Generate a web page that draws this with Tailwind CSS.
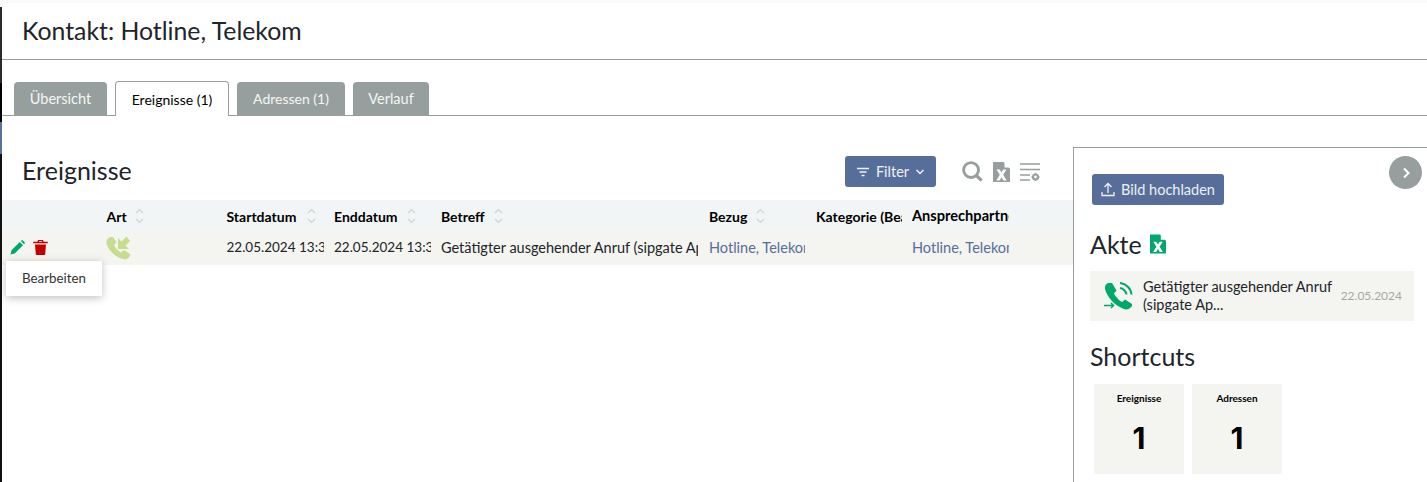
<!DOCTYPE html>
<html lang="de">
<head>
  <meta charset="UTF-8">
  <title>Kontakt: Hotline, Telekom</title>
  <script src="https://cdn.jsdelivr.net/npm/@tailwindcss/browser@4"></script>
</head>
<body class="bg-white h-[482px] overflow-hidden font-['Lato','Noto_Sans',sans-serif] text-[#212529]">
  <div class="relative flex h-[482px]">
    <!-- linker Rand -->
    <div class="w-[2px] shrink-0 flex flex-col">
      <div class="h-[7px] bg-white"></div>
      <div class="h-[76px] bg-[#2b2b2b]"></div>
      <div class="h-[39px] bg-[#000000]"></div>
      <div class="h-[32px] bg-[#5a6f9c]"></div>
      <div class="flex-1 bg-[#111111]"></div>
    </div>

    <div class="flex-1 min-w-0 flex flex-col">
      <div class="h-[3px] bg-[#f8f9f9]"></div>
      <header class="h-[57px] border-b border-[#969f9e] pl-[20px] flex items-center">
        <h1 class="text-[24.8px] leading-none">Kontakt: Hotline, Telekom</h1>
      </header>

      <!-- Tabs -->
      <nav class="h-[56px] border-b border-[#969f9e] pl-[12px] flex items-end gap-[8px] text-[14px]">
        <a class="h-[33px] w-[93px] flex items-center justify-center rounded-t-[4px] bg-[#969f9e] text-white/90 text-[14.5px]">Übersicht</a>
        <a class="h-[35px] w-[114px] -mb-[1px] flex items-center justify-center rounded-t-[4px] border border-b-0 border-[#969f9e] bg-white text-black">Ereignisse (1)</a>
        <a class="h-[33px] w-[108px] flex items-center justify-center rounded-t-[4px] bg-[#969f9e] text-white/90">Adressen (1)</a>
        <a class="h-[33px] w-[76px] flex items-center justify-center rounded-t-[4px] bg-[#969f9e] text-white/90 text-[14.5px]">Verlauf</a>
      </nav>

      <div class="flex-1 flex min-h-0">
        <!-- Ereignisse -->
        <main class="w-[1071px] shrink-0 pt-[31px]">
          <div class="h-[53px] flex items-start pl-[20px] pr-[32px]">
            <h2 class="text-[25px] leading-[46px] h-[46px]">Ereignisse</h2>
            <button class="ml-auto mt-[9px] h-[31px] w-[91px] rounded-[3px] bg-[#576e9b] text-white/90 text-[14.5px] flex items-center justify-center gap-[6px]">
              <svg class="w-[14px] h-[14px]" viewBox="0 0 14 14" fill="none" stroke="currentColor" stroke-width="1.4"><path d="M1 3.500h12M3.500 7h7M5.500 10.500h3"/></svg>
              Filter
              <svg class="w-[10px] h-[10px]" viewBox="0 0 10 10" fill="none" stroke="currentColor" stroke-width="1.500"><path d="M1.500 3l3.500 3.500L8.500 3"/></svg>
            </button>
            <div class="ml-[26px] mt-[14px] flex items-center gap-[9.500px] text-[#969f9e]">
              <svg class="w-[21px] h-[21px]" viewBox="0 0 22 22" fill="none" stroke="currentColor"><circle cx="9.500" cy="9.500" r="7.800" stroke-width="3"/><path d="M15 15l5.500 5.500" stroke-width="3.500"/></svg>
              <svg class="w-[17px] h-[20px]" viewBox="0 0 17 20" fill="currentColor"><path d="M0 0h10.500L17 6.500V20H0z"/><path d="M11.500 0v5.500H17z" fill="#fff"/><path d="M3.500 7.500h3.200L8.500 10.500l1.800-3h3.200l-3.300 5.300 3.500 5.700h-3.300l-1.900-3.200-1.900 3.200H3.300l3.500-5.700z" fill="#fff"/></svg>
              <svg class="w-[22px] h-[20px]" viewBox="0 0 22 20" fill="none" stroke="currentColor" stroke-width="1.500"><path d="M1 2h20M1 7.500h20M1 13h10M1 18h10"/><circle cx="16.500" cy="15" r="2.500" stroke-width="2.200"/><path d="M16.500 11v1.500M16.500 17.500V19M12.500 15H14M19 15h1.500" stroke-width="1.500"/></svg>
            </div>
          </div>

          <!-- Tabelle -->
          <div class="h-[32px] bg-[#f1f5f6] flex items-center text-[14px] font-bold text-black">
            <div class="w-[104.500px]"></div>
            <div class="w-[120px] flex items-center gap-[8px]">Art
              <svg class="w-[9px] h-[16px] text-[#cfd4d2]" viewBox="0 0 9 16" fill="none" stroke="currentColor" stroke-width="1.200"><path d="M1 5l3.500-3.500L8 5M1 11l3.500 3.500L8 11"/></svg>
            </div>
            <div class="w-[107.500px] flex items-center gap-[11px]">Startdatum
              <svg class="w-[9px] h-[16px] text-[#cfd4d2]" viewBox="0 0 9 16" fill="none" stroke="currentColor" stroke-width="1.200"><path d="M1 5l3.500-3.500L8 5M1 11l3.500 3.500L8 11"/></svg>
            </div>
            <div class="w-[107px] flex items-center gap-[9px]">Enddatum
              <svg class="w-[9px] h-[16px] text-[#cfd4d2]" viewBox="0 0 9 16" fill="none" stroke="currentColor" stroke-width="1.200"><path d="M1 5l3.500-3.500L8 5M1 11l3.500 3.500L8 11"/></svg>
            </div>
            <div class="w-[268px] flex items-center gap-[9px]">Betreff
              <svg class="w-[9px] h-[16px] text-[#cfd4d2]" viewBox="0 0 9 16" fill="none" stroke="currentColor" stroke-width="1.200"><path d="M1 5l3.500-3.500L8 5M1 11l3.500 3.500L8 11"/></svg>
            </div>
            <div class="w-[107px] flex items-center gap-[9px]">Bezug
              <svg class="w-[9px] h-[16px] text-[#cfd4d2]" viewBox="0 0 9 16" fill="none" stroke="currentColor" stroke-width="1.200"><path d="M1 5l3.500-3.500L8 5M1 11l3.500 3.500L8 11"/></svg>
            </div>
            <div class="w-[86px] mr-[10px] overflow-hidden whitespace-nowrap">Kategorie (Bearbeiter)</div>
            <div class="w-[97px] overflow-hidden whitespace-nowrap text-[14.6px]">Ansprechpartner</div>
          </div>
          <div class="h-[33px] pb-[2px] bg-[#f4f4f0] flex items-center text-[14.5px]">
            <div class="w-[104.500px] pl-[8px] flex items-center gap-[8px]">
              <svg class="w-[15px] h-[15px] text-[#00a86b]" viewBox="0 0 15 15" fill="currentColor"><path d="M.5 14.500l1-4.300L9.800 2l3.200 3.200-8.300 8.300zM10.800 1l.6-.6a1 1 0 0 1 1.400 0l1.800 1.800a1 1 0 0 1 0 1.400l-.6.6z"/></svg>
              <svg class="w-[15px] h-[15px] text-[#c40000]" viewBox="0 0 15 15" fill="currentColor"><path d="M5 0h5l.6 1.800h4.200v1.400H.2V1.800h4.200zM6 1v.8h3V1z" fill-rule="evenodd"/><path d="M2 4.500h11l-.8 9.700a1 1 0 0 1-1 .8H3.800a1 1 0 0 1-1-.8z"/></svg>
            </div>
            <div class="w-[120px]">
              <svg class="-ml-[1px] w-[24px] h-[24px] text-[#c6dd8f]" viewBox="0 0 24 24" fill="currentColor"><path d="M4 1C2 2 0 4 .5 7 2 14 9 21 17 23c3 1 5 0 7-3v-2l-6-4-3 2.500c-3-1.500-6-5-7-7.500l2.500-3L7 1z"/><path d="M12 2v11h11l-3.500-3.500L24 5l-3.500-4.500L15.500 5.500z"/></svg>
            </div>
            <div class="w-[97.500px] mr-[10px] overflow-hidden whitespace-nowrap text-[13.5px]">22.05.2024 13:30</div>
            <div class="w-[97px] mr-[10px] overflow-hidden whitespace-nowrap text-[13.5px]">22.05.2024 13:30</div>
            <div class="w-[257px] mr-[11px] overflow-hidden whitespace-nowrap">Getätigter ausgehender Anruf (sipgate App)</div>
            <div class="w-[96px] mr-[11px] overflow-hidden whitespace-nowrap text-[#576e9b]">Hotline, Telekom</div>
            <div class="w-[96px]"></div>
            <div class="w-[97px] overflow-hidden whitespace-nowrap text-[#576e9b]">Hotline, Telekom</div>
          </div>
        </main>

        <!-- Seitenleiste -->
        <aside class="relative flex-1 mt-[31px] border-l border-t border-[#969f9e] pl-[16px] pr-[13px]">
          <button class="mt-[26px] ml-[2px] h-[31px] w-[132px] rounded-[3px] bg-[#576e9b] text-white/90 text-[14.5px] flex items-center justify-center gap-[6px]">
            <svg class="w-[14px] h-[15px]" viewBox="0 0 14 15" fill="none" stroke="currentColor" stroke-width="1.300"><path d="M7 11V1.500M3.500 5 7 1.500 10.500 5M1 10v3.500h12V10"/></svg>
            Bild hochladen
          </button>
          <button class="absolute right-[5px] top-[8px] w-[33px] h-[33px] rounded-full bg-[#969f9e] flex items-center justify-center" aria-label="Einklappen">
            <svg class="w-[12px] h-[12px]" viewBox="0 0 12 12" fill="none" stroke="#fff" stroke-width="2"><path d="M4 1.500 8.500 6 4 10.500"/></svg>
          </button>
          <div class="mt-[21px] flex items-center gap-[8px]">
            <h3 class="text-[25px] leading-[36px]">Akte</h3>
            <svg class="w-[16px] h-[20px] text-[#00a86b]" viewBox="0 0 17 20" fill="currentColor"><path d="M0 0h10.500L17 6.500V20H0z"/><path d="M11.500 0v5.500H17z" fill="#fff"/><path d="M3.500 7.500h3.200L8.500 10.500l1.800-3h3.200l-3.300 5.300 3.500 5.700h-3.300l-1.900-3.200-1.900 3.200H3.300l3.500-5.700z" fill="#fff"/></svg>
          </div>
          <div class="mt-[9px] h-[50px] bg-[#f4f4f0] flex items-center pl-[14px] pr-[12px]">
            <svg class="w-[29px] h-[28px] shrink-0 text-[#00a86b]" viewBox="0 0 29 28" fill="currentColor"><path d="M4 1C2 2 .5 4 1 7c2 8 10 17 19 20 3 1 6 0 8-3v-2l-7-4.500-3 2.500c-3-1.500-6.500-5.500-8-8.500l2.500-3L8 1z"/><path d="M16 1c6 .5 11 5.500 11.500 11.500M16 6c3.200.4 6.100 3.300 6.500 6.500" fill="none" stroke="currentColor" stroke-width="2"/><path d="M0 23.500h9M7 21l2.500 2.500L7 26" fill="none" stroke="currentColor" stroke-width="1.500"/></svg>
            <div class="ml-[10px] w-[191px] text-[14.5px] leading-[18px]">Getätigter ausgehender Anruf (sipgate Ap...</div>
            <div class="ml-auto text-[12px] text-[#a3a8a6]">22.05.2024</div>
          </div>
          <h3 class="mt-[17px] text-[25px] leading-[36px]">Shortcuts</h3>
          <div class="mt-[10px] ml-[4px] flex gap-[8px]">
            <div class="w-[90px] h-[90px] bg-[#f4f4f0] flex flex-col items-center text-black">
              <div class="mt-[7px] text-[10px] font-bold leading-[14px]">Ereignisse</div>
              <div class="mt-[15px] font-['Inter',sans-serif] text-[30px] font-bold leading-[36px]">1</div>
            </div>
            <div class="w-[90px] h-[90px] bg-[#f4f4f0] flex flex-col items-center text-black">
              <div class="mt-[7px] text-[10px] font-bold leading-[14px]">Adressen</div>
              <div class="mt-[15px] font-['Inter',sans-serif] text-[30px] font-bold leading-[36px]">1</div>
            </div>
          </div>
        </aside>
      </div>
    </div>

    <!-- Tooltip -->
    <div class="absolute left-[6px] top-[261px] w-[96px] h-[35px] bg-white shadow-[0_2px_8px_rgba(0,0,0,0.25)] flex items-center justify-center text-[13.3px] text-[#333]">Bearbeiten</div>
  </div>
</body>
</html>
